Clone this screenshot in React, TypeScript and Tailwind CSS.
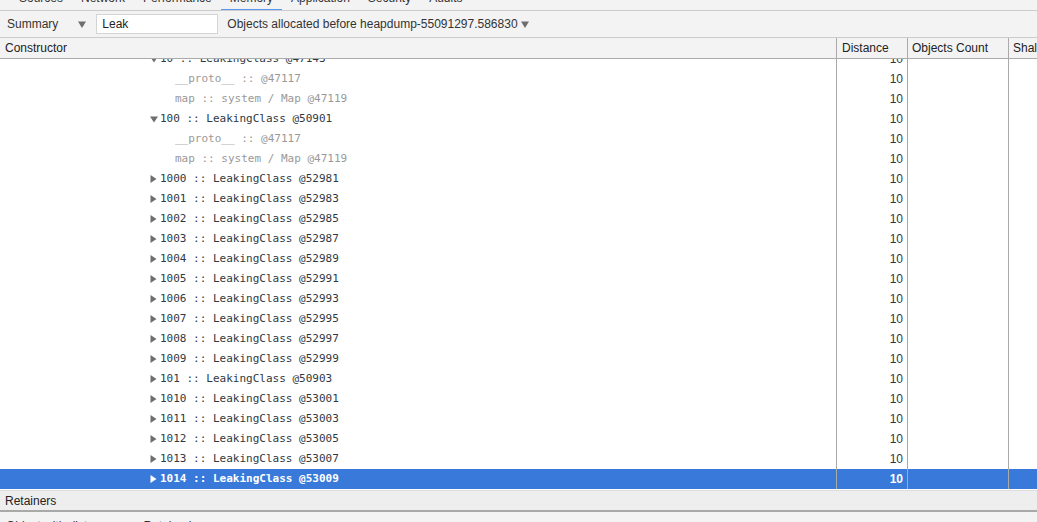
import React from 'react';

type Row = { text: string; kind: 'open' | 'closed' | 'leaf' };

const rows: Row[] = [
  { text: '10 :: LeakingClass @47143', kind: 'open' },
  { text: '__proto__ :: @47117', kind: 'leaf' },
  { text: 'map :: system / Map @47119', kind: 'leaf' },
  { text: '100 :: LeakingClass @50901', kind: 'open' },
  { text: '__proto__ :: @47117', kind: 'leaf' },
  { text: 'map :: system / Map @47119', kind: 'leaf' },
  ...Array.from({ length: 10 }, (_, i) => ({
    text: `${1000 + i} :: LeakingClass @${52981 + i * 2}`,
    kind: 'closed' as const,
  })),
  { text: '101 :: LeakingClass @50903', kind: 'closed' },
  ...Array.from({ length: 5 }, (_, i) => ({
    text: `${1010 + i} :: LeakingClass @${53001 + i * 2}`,
    kind: 'closed' as const,
  })),
];

const tabs = ['Sources', 'Network', 'Performance', 'Memory', 'Application', 'Security', 'Audits'];

function Triangle({ open, color }: { open: boolean; color: string }) {
  return open ? (
    <svg width="8" height="7" viewBox="0 0 8 7" className="shrink-0">
      <path d="M0 0.5 L8 0.5 L4 6.5 Z" fill={color} />
    </svg>
  ) : (
    <svg width="7" height="8" viewBox="0 0 7 8" className="shrink-0">
      <path d="M0.5 0 L6.5 4 L0.5 8 Z" fill={color} />
    </svg>
  );
}

function DownArrow() {
  return (
    <svg width="8" height="7" viewBox="0 0 8 7">
      <path d="M0 0.5 L8 0.5 L4 7 Z" fill="#6e6e6e" />
    </svg>
  );
}

export default function App() {
  return (
    <div className="w-[1037px] h-[522px] overflow-hidden bg-white flex flex-col font-['Liberation_Sans',Arial,sans-serif] text-[12px] text-[#303942]">
      {/* tab strip, scrolled mostly out of view */}
      <div className="h-[11px] shrink-0 bg-[#f3f3f3] border-b border-[#cccccc] overflow-hidden flex pl-[10px]">
        {tabs.map((t) => (
          <div
            key={t}
            className={`h-[24px] mt-[-13px] px-[9px] flex items-center border-b-2 ${
              t === 'Memory' ? 'border-[#5a95ef]' : 'border-transparent'
            } text-[#333]`}
          >
            {t}
          </div>
        ))}
      </div>

      {/* toolbar */}
      <div className="h-[27px] shrink-0 bg-[#f3f3f3] border-b border-[#cccccc] flex items-center">
        <span className="ml-[7px] text-[#333]">Summary</span>
        <span className="ml-[20px] flex items-center">
          <DownArrow />
        </span>
        <div className="ml-[10px] w-[122px] h-[20px] bg-white border border-[#d4d4d4] flex items-center pl-[5px] text-[#222]">
          Leak
        </div>
        <span className="ml-[9px] text-[#333]">Objects allocated before heapdump-55091297.586830</span>
        <span className="ml-[3px] flex items-center">
          <DownArrow />
        </span>
      </div>

      {/* grid header */}
      <div className="h-[21px] shrink-0 bg-[#f3f3f3] border-b border-[#aaaaaa] flex text-[#222]">
        <div className="w-[837px] border-r border-[#aaaaaa] flex items-center pl-[5px]">Constructor</div>
        <div className="w-[71px] border-r border-[#aaaaaa] flex items-center pl-[5px]">Distance</div>
        <div className="w-[101px] border-r border-[#aaaaaa] flex items-center pl-[4px]">Objects Count</div>
        <div className="flex-1 flex items-center pl-[4px] overflow-hidden whitespace-nowrap">Shallow Size</div>
      </div>

      {/* grid body */}
      <div className="flex-1 overflow-hidden">
        <div className="mt-[-10px] flex flex-col">
          {rows.map((r, i) => {
            const selected = i === rows.length - 1;
            const textColor = selected ? 'text-white' : r.kind === 'leaf' ? 'text-[#999999]' : 'text-[#303942]';
            return (
              <div key={i} className={`h-[20px] shrink-0 flex ${selected ? 'bg-[#3879d9]' : ''}`}>
                <div
                  className={`w-[837px] border-r border-[#aaaaaa] flex items-center font-['DejaVu_Sans_Mono',monospace] text-[11px] whitespace-nowrap ${textColor} ${
                    selected ? 'font-bold' : ''
                  } ${r.kind === 'leaf' ? 'pl-[175px]' : 'pl-[150px]'}`}
                >
                  {r.kind !== 'leaf' && (
                    <span className="w-[10px] flex items-center">
                      <Triangle open={r.kind === 'open'} color={selected ? '#ffffff' : '#6e6e6e'} />
                    </span>
                  )}
                  {r.text}
                </div>
                <div
                  className={`w-[71px] border-r border-[#aaaaaa] flex items-center justify-end pr-[4px] ${
                    selected ? 'text-white font-bold' : 'text-[#303942]'
                  }`}
                >
                  10
                </div>
                <div className="w-[101px] border-r border-[#aaaaaa]" />
                <div className="flex-1" />
              </div>
            );
          })}
        </div>
      </div>

      {/* retainers split */}
      <div className="h-[22px] shrink-0 bg-[#eeeeee] border-t border-[#dddddd] border-b-2 border-b-[#a9a9a9] flex items-center pl-[5px] text-[#222]">
        Retainers
      </div>
      <div className="h-[10px] shrink-0 bg-[#f3f3f3] overflow-hidden">
        <div className="mt-[5px] pl-[6px] flex gap-[30px] text-[#333] whitespace-nowrap">
          <span>Object with distance</span>
          <span>Retained</span>
        </div>
      </div>
    </div>
  );
}
